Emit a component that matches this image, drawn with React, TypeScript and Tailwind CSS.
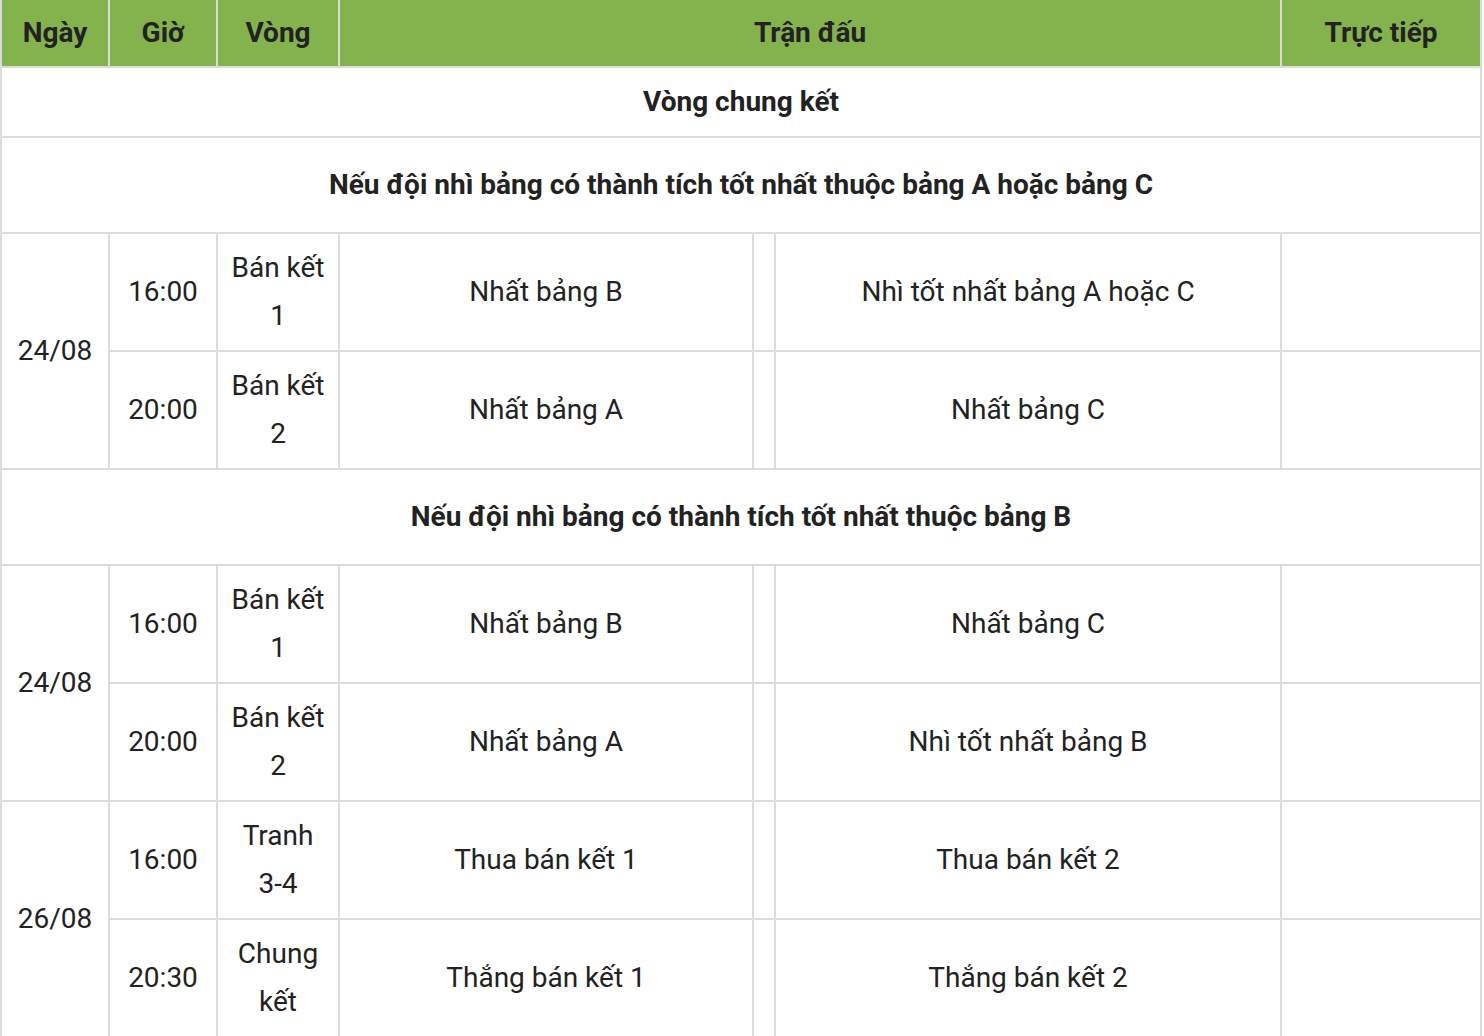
const cell = "border-2 border-[#dcdcdc] text-center align-middle px-[10px] leading-[48px]";

type Match = { time: string; round: string[]; home: string; away: string };
type Block = { date: string; matches: Match[] };

const sections: { title: string; blocks: Block[] }[] = [
  {
    title: "Nếu đội nhì bảng có thành tích tốt nhất thuộc bảng A hoặc bảng C",
    blocks: [
      {
        date: "24/08",
        matches: [
          { time: "16:00", round: ["Bán kết", "1"], home: "Nhất bảng B", away: "Nhì tốt nhất bảng A hoặc C" },
          { time: "20:00", round: ["Bán kết", "2"], home: "Nhất bảng A", away: "Nhất bảng C" },
        ],
      },
    ],
  },
  {
    title: "Nếu đội nhì bảng có thành tích tốt nhất thuộc bảng B",
    blocks: [
      {
        date: "24/08",
        matches: [
          { time: "16:00", round: ["Bán kết", "1"], home: "Nhất bảng B", away: "Nhất bảng C" },
          { time: "20:00", round: ["Bán kết", "2"], home: "Nhất bảng A", away: "Nhì tốt nhất bảng B" },
        ],
      },
      {
        date: "26/08",
        matches: [
          { time: "16:00", round: ["Tranh", "3-4"], home: "Thua bán kết 1", away: "Thua bán kết 2" },
          { time: "20:30", round: ["Chung", "kết"], home: "Thắng bán kết 1", away: "Thắng bán kết 2" },
        ],
      },
    ],
  },
];

const App = () => {
  return (
    <div className="bg-white w-[1484px] h-[1036px] overflow-hidden text-[#222] text-[28px]" style={{ fontFamily: "Roboto, 'Noto Sans', sans-serif" }}>
      <table className="table-fixed border-collapse w-[1481px]">
        <colgroup>
          <col className="w-[108px]" />
          <col className="w-[108px]" />
          <col className="w-[122px]" />
          <col className="w-[414px]" />
          <col className="w-[22px]" />
          <col className="w-[506px]" />
          <col className="w-[200px]" />
        </colgroup>
        <thead>
          <tr className="h-[67px] bg-[#84b34e]">
            <th className={`${cell} border-t-0 font-bold`}>Ngày</th>
            <th className={`${cell} border-t-0 font-bold`}>Giờ</th>
            <th className={`${cell} border-t-0 font-bold`}>Vòng</th>
            <th colSpan={3} className={`${cell} border-t-0 font-bold`}>Trận đấu</th>
            <th className={`${cell} border-t-0 font-bold`}>Trực tiếp</th>
          </tr>
        </thead>
        <tbody>
          <tr className="h-[70px]">
            <td colSpan={7} className={`${cell} font-bold`}>Vòng chung kết</td>
          </tr>
          {sections.map((s) => (
            <>
              <tr key={s.title} className="h-[96px]">
                <td colSpan={7} className={`${cell} font-bold`}>{s.title}</td>
              </tr>
              {s.blocks.map((b) =>
                b.matches.map((m, i) => (
                  <tr key={b.date + m.time + s.title} className="h-[118px]">
                    {i === 0 && (
                      <td rowSpan={b.matches.length} className={cell}>{b.date}</td>
                    )}
                    <td className={cell}>{m.time}</td>
                    <td className={cell}>
                      {m.round[0]}
                      <br />
                      {m.round[1]}
                    </td>
                    <td className={cell}>{m.home}</td>
                    <td className={cell}></td>
                    <td className={cell}>{m.away}</td>
                    <td className={cell}></td>
                  </tr>
                ))
              )}
            </>
          ))}
        </tbody>
      </table>
    </div>
  );
};

export default App;
